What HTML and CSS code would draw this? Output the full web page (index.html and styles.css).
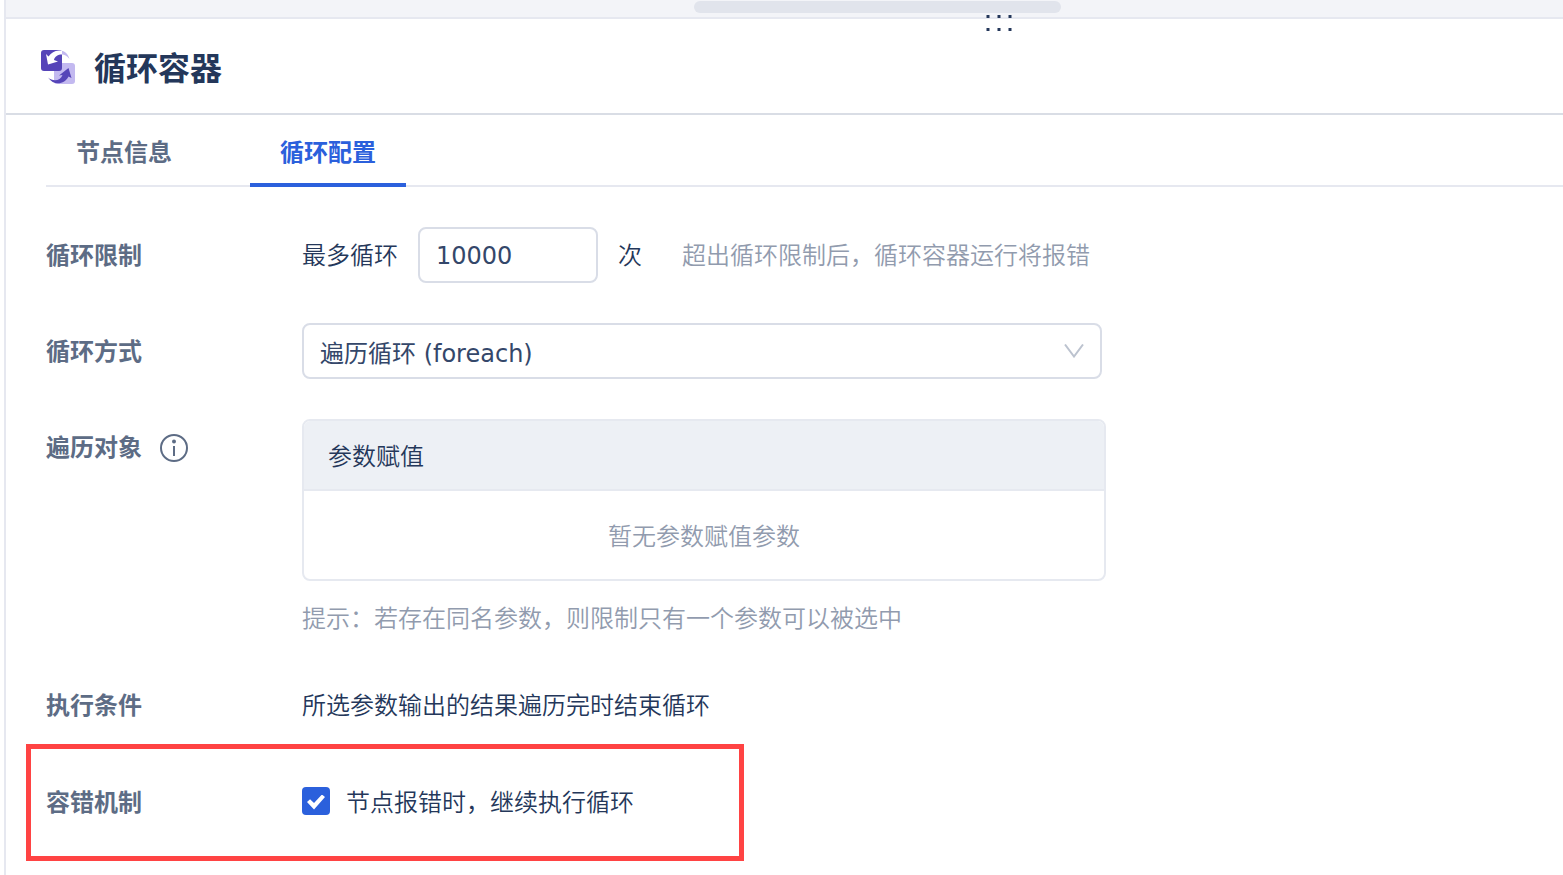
FILE: index.html
```html
<!DOCTYPE html>
<html lang="zh-CN">
    <head>
        <meta charset="utf-8">
        <title>循环容器</title>
        <link rel="stylesheet" href="styles.css">
    </head>
    <body>
        <div class="panel">
            <div class="canvas-edge">
                <div class="scrollbar"></div>
                <svg class="drag-handle" width="30" height="16" viewBox="0 0 30 16" fill="#24375a">
                    <rect x="1.500" width="3" height="3"/>
                    <rect x="12.500" width="3" height="3"/>
                    <rect x="23.500" width="3" height="3"/>
                    <rect x="1.500" y="13" width="3" height="3"/>
                    <rect x="12.500" y="13" width="3" height="3"/>
                    <rect x="23.500" y="13" width="3" height="3"/>
                </svg>
            </div>
            <header class="header">
                <svg class="logo" width="34" height="34" viewBox="0 0 34 34">
                    <rect x="13" y="13" width="21" height="21" rx="3" fill="#c3b9f0"/>
                    <rect width="21" height="21" rx="3" fill="#5544b8"/>
                    <path d="M15 1C21-1 27 2 28.500 9C25.500 5.500 23.500 4.500 21 4.500V1Z" fill="#c3b9f0"/>
                    <path d="M5 4L7.500 6.500C11 1.500 15 0 21 1V4.500C17 4.500 13.500 6.500 13 10L17 11.500L7 14.500Z" fill="#fff"/>
                    <path d="M27.500 18L30.500 28L27.500 26.500C24 34 13 36.500 7 27.500C12 32 19.500 31 21.500 25L18 25.500Z" fill="#5544b8"/>
                </svg>
                <h1 class="title">循环容器</h1>
            </header>
            <nav class="tabs">
                <button class="tab">节点信息</button>
                <button class="tab active">循环配置</button>
            </nav>
            <form class="form">
                <div class="row">
                    <label class="label" for="limit">循环限制</label>
                    <div class="field limit">
                        <span>最多循环</span>
                        <input class="box number" id="limit" type="text" value="10000">
                        <span>次</span>
                        <span class="hint limit-hint">超出循环限制后，循环容器运行将报错</span>
                    </div>
                </div>
                <div class="row">
                    <label class="label" for="mode">循环方式</label>
                    <div class="field select-wrap">
                        <select class="box select" id="mode">
                            <option>遍历循环 (foreach)</option>
                        </select>
                        <svg class="arrow" width="20" height="14" viewBox="0 0 20 14" fill="none" stroke="#bcc3cf" stroke-width="2">
                            <path d="M1 .5L10 12.500L19 .5"/>
                        </svg>
                    </div>
                </div>
                <div class="row">
                    <div class="label">
                        <span>遍历对象</span>
                        <svg width="28" height="28" viewBox="0 0 28 28" fill="none" stroke="#5d6c85" stroke-width="2">
                            <circle cx="14" cy="14" r="13"/>
                            <path d="M14 12V22"/>
                            <circle cx="14" cy="7.500" r="2" fill="#5d6c85" stroke="none"/>
                        </svg>
                    </div>
                    <div class="field">
                        <table class="params">
                            <thead>
                                <tr><th>参数赋值</th></tr>
                            </thead>
                            <tbody>
                                <tr><td>暂无参数赋值参数</td></tr>
                            </tbody>
                        </table>
                        <p class="hint tip">提示：若存在同名参数，则限制只有一个参数可以被选中</p>
                    </div>
                </div>
                <div class="row">
                    <div class="label">执行条件</div>
                    <div class="field">所选参数输出的结果遍历完时结束循环</div>
                </div>
                <div class="row marked">
                    <div class="label">容错机制</div>
                    <label class="field check">
                        <input class="checkbox" type="checkbox" checked>
                        <span>节点报错时，继续执行循环</span>
                    </label>
                </div>
            </form>
        </div>
    </body>
</html>
```

FILE: styles.css
```css
* {
    box-sizing: border-box;
}
body {
    margin: 0;
    padding-left: 4px;
    background-color: #fff;
    color: #24375a;
    font-family: "DejaVu Sans", "Noto Sans CJK SC", sans-serif;
    font-size: 24px;
    line-height: 58px;
}
.panel {
    min-height: 100vh;
    border-left: 2px solid #e6e8f0;
}
.canvas-edge {
    position: relative;
    height: 19px;
    padding-top: 1px;
    background-color: #f3f4f8;
    border-bottom: 2px solid #e6e8f0;
}
.scrollbar {
    width: 367px;
    height: 12px;
    margin-left: 688px;
    border-radius: 6px;
    background-color: #e1e4ec;
}
/* hangs over the line between the canvas and the panel */
.drag-handle {
    position: absolute;
    top: 15px;
    left: 979px;
}
.header {
    display: flex;
    align-items: center;
    gap: 19px;
    height: 96px;
    padding: 2px 0 0 35px;
    border-bottom: 2px solid #d9dde5;
}
.title {
    margin: 0;
    padding-top: 4px;
    font-size: 32px;
    font-weight: bold;
}
.tabs {
    display: flex;
    gap: 48px;
    height: 72px;
    margin-left: 40px;
    box-shadow: inset 0 -2px #e6e8f0;
}
.tab {
    padding: 8px 30px 0;
    border: 0;
    border-bottom: 4px solid transparent;
    background: none;
    color: #5d6c85;
    font: inherit;
    font-weight: bold;
}
.tab.active {
    border-bottom-color: #2b60dc;
    color: #2b60dc;
}
.form {
    display: flex;
    flex-direction: column;
    gap: 38px;
    padding: 40px 20px 14px 40px;
}
.row {
    display: flex;
}
.label {
    display: flex;
    align-items: center;
    gap: 18px;
    flex: 0 0 256px;
    height: 58px;
    color: #5d6c85;
    font-weight: bold;
}
.field {
    flex: 1;
    font-weight: 350;
}
.limit {
    display: flex;
    gap: 20px;
}
.box {
    height: 56px;
    padding: 0 16px;
    border: 2px solid #d9dde7;
    border-radius: 8px;
    background-color: #fff;
    color: #34476a;
    font: inherit;
    font-weight: 400;
}
.number {
    width: 180px;
    padding-top: 2px;
}
.hint {
    color: #919bae;
}
.limit-hint {
    margin-left: 20px;
}
.select-wrap {
    position: relative;
    max-width: 800px;
}
.select {
    display: block;
    width: 100%;
    padding-bottom: 2px;
    appearance: none;
}
.arrow {
    position: absolute;
    top: 21px;
    right: 18px;
    pointer-events: none;
}
.params {
    width: 100%;
    max-width: 804px;
    border: 2px solid #e6e9f0;
    border-radius: 8px;
    border-spacing: 0;
    overflow: hidden;
}
.params th {
    height: 70px;
    padding: 4px 24px 0;
    border-bottom: 2px solid #e6e9f0;
    background-color: #edf0f5;
    font-weight: 350;
    text-align: left;
}
.params td {
    height: 88px;
    padding: 4px 0 0;
    color: #919bae;
    text-align: center;
}
.tip {
    margin: 18px 0 0;
    line-height: 40px;
}
.marked {
    width: 718px;
    margin: -29px 0 0 -20px;
    padding: 25px 15px 24px;
    border: 5px solid #ff4343;
}
.check {
    display: flex;
    align-items: flex-start;
    gap: 16px;
}
.checkbox {
    display: grid;
    place-items: center;
    width: 28px;
    height: 28px;
    margin: 13px 0 0;
    padding-top: 2px;
    border-radius: 4px;
    background-color: #2b60dc;
    appearance: none;
}
.checkbox:checked::after {
    content: "";
    width: 18px;
    height: 15px;
    background-color: #fff;
    clip-path: polygon(0 50%, 17% 32%, 39% 56%, 83% 0, 100% 17%, 39% 100%);
}
```
